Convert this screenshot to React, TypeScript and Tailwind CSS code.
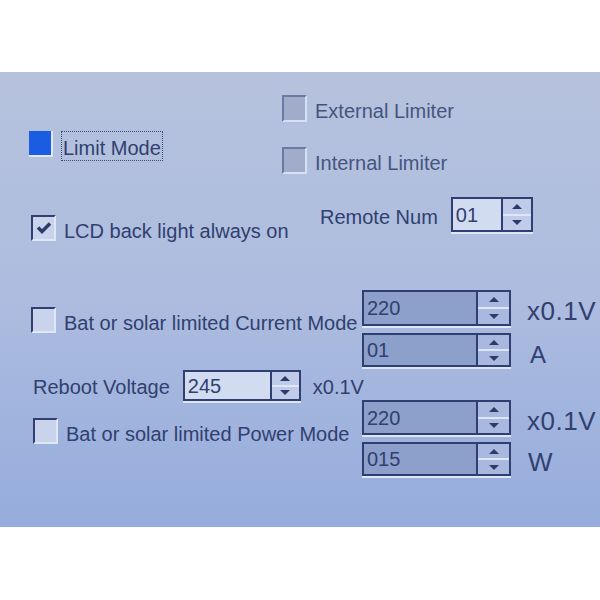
import React from "react";

function CheckBox({ checked = false, disabled = false }: { checked?: boolean; disabled?: boolean }) {
  if (disabled) {
    return (
      <div className="w-[25px] h-[27px] shrink-0 border-t-2 border-l-2 border-b-2 border-r-2 border-t-[#6b7aa4] border-l-[#6b7aa4] border-b-[#d6e0f3] border-r-[#d6e0f3] bg-[#a0acca]" />
    );
  }
  return (
    <div className="w-[25px] h-[26px] shrink-0 flex items-center justify-center border-t-2 border-l-2 border-b-2 border-r-2 border-t-[#2f3f72] border-l-[#2f3f72] border-b-[#dfe7f7] border-r-[#dfe7f7] bg-[#c9d4ec]">
      {checked && (
        <svg width="16" height="14" viewBox="0 0 16 14">
          <path d="M2 6.5 L6 10.5 L14 2.5" fill="none" stroke="#2d3b6a" strokeWidth="3.4" strokeLinejoin="miter" />
        </svg>
      )}
    </div>
  );
}

function Arrows({ face }: { face: string }) {
  return (
    <div className={`w-full h-full flex flex-col border-l-2 border-[#2f3f72] ${face}`}>
      <div className="flex-1 flex items-center justify-center">
        <div className="w-0 h-0 border-x-[5px] border-x-transparent border-b-[5px] border-b-[#2d3b6a]" />
      </div>
      <div className="h-[2px] bg-[#dde6f6]" />
      <div className="flex-1 flex items-center justify-center">
        <div className="w-0 h-0 border-x-[5px] border-x-transparent border-t-[5px] border-t-[#2d3b6a]" />
      </div>
    </div>
  );
}

function Spin({
  value,
  width,
  height,
  btn,
  disabled = false,
}: {
  value: string;
  width: string;
  height: string;
  btn: string;
  disabled?: boolean;
}) {
  return (
    <div
      className={`flex shrink-0 ${width} ${height} border-2 border-[#2f3f72] shadow-[0_2px_0_#dde6f6] ${
        disabled ? "bg-[#8d9fcb]" : "bg-[#d2dcf1]"
      }`}
    >
      <div className="flex-1 flex items-center pl-[3px] text-[20px] leading-none">{value}</div>
      <div className={`${btn} h-full`}>
        <Arrows face={disabled ? "bg-[#a9b8de]" : "bg-[#bfcbe9]"} />
      </div>
    </div>
  );
}

export default function App() {
  return (
    <div
      className="w-[600px] h-[600px] bg-white pt-[72px] text-[20px] leading-none text-[#30406f]"
      style={{ fontFamily: "'Liberation Sans', Arial, sans-serif" }}
    >
      <div className="h-[455px] bg-linear-to-b from-[#b6c2dd] via-[#adbcdf] to-[#95acdc] pt-[23px]">
        {/* top section */}
        <div className="flex h-[78px]">
          <div className="w-[282px] pl-[29px] pt-[36px] flex items-start">
            <div className="w-[24px] h-[26px] shrink-0 bg-[#1a5ce2] border-b-2 border-r-2 border-[#dfe7f7]" />
            <div className="ml-[8px] h-[30px] px-[1px] pt-[3px] flex items-center border border-dotted border-[#3a4a78]">
              Limit Mode
            </div>
          </div>
          <div className="flex flex-col gap-[25px]">
            <div className="flex items-center h-[27px]">
              <CheckBox disabled />
              <span className="ml-[8px] pt-[5px] text-[#45557f]">External Limiter</span>
            </div>
            <div className="flex items-center h-[27px]">
              <CheckBox disabled />
              <span className="ml-[8px] pt-[4px] text-[#45557f]">Internal Limiter</span>
            </div>
          </div>
        </div>

        {/* LCD + remote num */}
        <div className="flex mt-[24px] h-[45px]">
          <div className="w-[320px] pl-[31px] pt-[18px] flex items-start">
            <div className="flex items-center">
              <CheckBox checked />
              <span className="ml-[8px] pt-[5px]">LCD back light always on</span>
            </div>
          </div>
          <div className="flex items-center h-[35px]">
            <span className="pt-[4px]">Remote Num</span>
            <div className="ml-[13px]">
              <Spin value="01" width="w-[82px]" height="h-[35px]" btn="w-[30px]" />
            </div>
          </div>
        </div>

        {/* lower section */}
        <div className="flex mt-[48px]">
          <div className="w-[362px] flex flex-col">
            <div className="pt-[17px] pl-[31px] flex items-center">
              <CheckBox />
              <span className="ml-[8px] pt-[5px] whitespace-nowrap">Bat or solar limited Current Mode</span>
            </div>
            <div className="mt-[37px] pl-[33px] flex items-center h-[31px]">
              <span className="whitespace-nowrap pt-[2px]">Reboot Voltage</span>
              <div className="ml-[13px]">
                <Spin value="245" width="w-[118px]" height="h-[31px]" btn="w-[29px]" />
              </div>
              <span className="ml-[12px] pt-[2px]">x0.1V</span>
            </div>
            <div className="mt-[17px] pl-[33px] flex items-center">
              <CheckBox />
              <span className="ml-[8px] pt-[6px] whitespace-nowrap">Bat or solar limited Power Mode</span>
            </div>
          </div>

          <div className="flex flex-col">
            <div className="flex items-center">
              <Spin value="220" width="w-[149px]" height="h-[36px]" btn="w-[33px]" disabled />
              <span className="ml-[16px] text-[26px] mt-[6px] tracking-[0.5px]">x0.1V</span>
            </div>
            <div className="flex items-center mt-[7px]">
              <Spin value="01" width="w-[149px]" height="h-[34px]" btn="w-[33px]" disabled />
              <span className="ml-[19px] text-[24px] mt-[10px]">A</span>
            </div>
            <div className="flex items-center mt-[33px]">
              <Spin value="220" width="w-[149px]" height="h-[35px]" btn="w-[33px]" disabled />
              <span className="ml-[16px] text-[26px] mt-[6px] tracking-[0.5px]">x0.1V</span>
            </div>
            <div className="flex items-center mt-[7px]">
              <Spin value="015" width="w-[149px]" height="h-[34px]" btn="w-[33px]" disabled />
              <span className="ml-[17px] text-[26px] mt-[6px]">W</span>
            </div>
          </div>
        </div>
      </div>
    </div>
  );
}
